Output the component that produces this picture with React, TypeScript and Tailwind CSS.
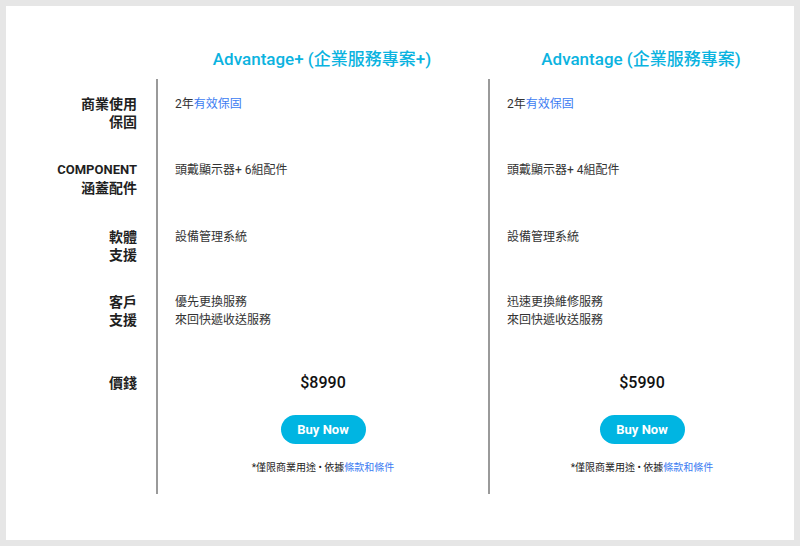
import React from "react";

type Plan = {
  title: string;
  warranty: string;
  parts: string;
  software: string;
  support: string[];
  price: string;
};

const plans: Plan[] = [
  {
    title: "Advantage+ (企業服務專案+)",
    warranty: "有效保固",
    parts: "頭戴顯示器+ 6組配件",
    software: "設備管理系統",
    support: ["優先更換服務", "來回快遞收送服務"],
    price: "$8990",
  },
  {
    title: "Advantage (企業服務專案)",
    warranty: "有效保固",
    parts: "頭戴顯示器+ 4組配件",
    software: "設備管理系統",
    support: ["迅速更換維修服務", "來回快遞收送服務"],
    price: "$5990",
  },
];

const rowHeights = ["h-[66px]", "h-[67px]", "h-[65px]", "h-[81px]", "h-[136px]"];

const labels = [
  ["商業使用", "保固"],
  ["COMPONENT", "涵蓋配件"],
  ["軟體", "支援"],
  ["客戶", "支援"],
  ["價錢"],
];

export default function App() {
  const font = { fontFamily: "Roboto, 'Noto Sans CJK TC', sans-serif" };

  const cell = (plan: Plan, row: number) => {
    if (row === 0)
      return (
        <p>
          2年<span className="text-[#3c7cf2]">{plan.warranty}</span>
        </p>
      );
    if (row === 1) return <p>{plan.parts}</p>;
    if (row === 2) return <p>{plan.software}</p>;
    if (row === 3)
      return (
        <>
          {plan.support.map(s => (
            <p key={s}>{s}</p>
          ))}
        </>
      );
    return null;
  };

  return (
    <div className="w-[800px] h-[546px] bg-[#e6e6e6] p-[6px]" style={font}>
      <div className="w-[788px] h-[534px] bg-white">
        {/* headings */}
        <div className="flex h-[73px] pt-[42px]">
          <div className="w-[150px]" />
          {plans.map((p, i) => (
            <div key={p.title} className={i === 0 ? "w-[332px] text-center" : "flex-1 text-center"}>
              <h2 className="text-[17px] leading-[22px] font-medium text-[#0bb3e0]">{p.title}</h2>
            </div>
          ))}
        </div>

        {/* body */}
        {labels.map((lab, r) => (
          <div key={r} className={`flex ${rowHeights[r]}`}>
            <div className="w-[150px] pr-[19px] pt-[16px] text-right text-[14px] leading-[18px] font-bold text-[#1f1f1f]">
              {lab.map(l => (
                <p key={l} className={l === "COMPONENT" ? "text-[13px]" : ""}>{l}</p>
              ))}
            </div>
            {plans.map((p, i) => (
              <div
                key={p.title}
                className={`${i === 0 ? "w-[332px]" : "flex-1"} border-l-2 border-[#9a9a9a] pl-[17px] pt-[16px] text-[12px] leading-[18px] text-[#333]`}
              >
                {r < 4 ? (
                  cell(p, r)
                ) : (
                  <div className="flex flex-col items-center -ml-[17px]">
                    <p className="text-[16px] leading-[18px] font-medium text-[#111]">{p.price}</p>
                    <button className="mt-[23px] w-[85px] h-[29px] rounded-full bg-[#00b5e2] text-white text-[13px] font-bold">
                      Buy Now
                    </button>
                    <p className="mt-[17px] text-[10px] leading-[14px] text-[#222]">
                      *僅限商業用途 • 依據<span className="text-[#3c7cf2]">條款和條件</span>
                    </p>
                  </div>
                )}
              </div>
            ))}
          </div>
        ))}
      </div>
    </div>
  );
}
